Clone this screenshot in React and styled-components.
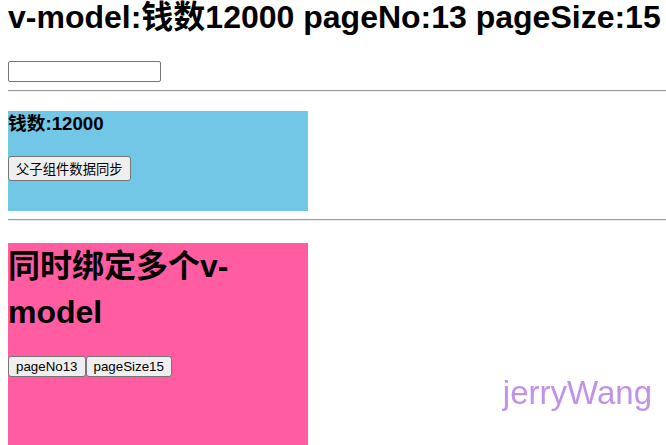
import React, { useState } from 'react';
import styled, { createGlobalStyle } from 'styled-components';

const GlobalStyle = createGlobalStyle`
  body {
    margin: 0;
    font-family: "Liberation Sans", "Noto Sans CJK SC", sans-serif;
    color: #000;
    background: #fff;
    overflow: hidden;
  }
`;

const Page = styled.div`
  padding-left: 8px;
`;

const Title = styled.h1`
  margin: -6px 0 21.44px;
  font-size: 32px;
  line-height: 46px;
  font-weight: bold;
  white-space: nowrap;
`;

const MoneyInput = styled.input`
  display: block;
  box-sizing: border-box;
  width: 153px;
  height: 21px;
  margin: 0;
  padding: 1px 2px;
  border: 1px solid #767676;
  border-radius: 2px;
  font: 13.33px "Liberation Sans", sans-serif;
`;

const Divider = styled.hr`
  margin: 8px 0;
  height: 0;
  border: 0;
  border-top: 1px solid #9a9a9a;
  border-bottom: 1px solid #eeeeee;
`;

const Panel = styled.div`
  width: 300px;
  height: ${(p) => p.$height}px;
  background: ${(p) => p.$color};
`;

const PanelHeading = styled.h3`
  margin: 18.72px 0;
  font-size: 18.72px;
  line-height: 26px;
  font-weight: bold;
`;

const BigHeading = styled.h1`
  margin: 21.44px 0;
  font-size: 32px;
  line-height: 46px;
  font-weight: bold;
`;

const ButtonRow = styled.div`
  display: flex;
`;

const Button = styled.button`
  box-sizing: border-box;
  margin: 0;
  padding: 2px 7px;
  border: 1px solid #767676;
  border-radius: 3px;
  background: #efefef;
  color: #000;
  font: 13.33px "Liberation Sans", "Noto Sans CJK SC", sans-serif;
  cursor: pointer;
`;

const Watermark = styled.div`
  position: fixed;
  right: 14px;
  bottom: 33px;
  font-size: 33px;
  color: #c192ea;
  pointer-events: none;
`;

export default function App() {
  const [money, setMoney] = useState(12000);
  const [pageNo, setPageNo] = useState(13);
  const [pageSize, setPageSize] = useState(15);

  return (
    <Page>
      <GlobalStyle />
      <Title>
        v-model:钱数{money} pageNo:{pageNo} pageSize:{pageSize}
      </Title>
      <MoneyInput type="text" defaultValue="" />
      <Divider />
      <Panel $color="#72c6e6" $height={100}>
        <PanelHeading>钱数:{money}</PanelHeading>
        <Button onClick={() => setMoney(money)}>父子组件数据同步</Button>
      </Panel>
      <Divider />
      <Panel $color="#ff5ca2" $height={210}>
        <BigHeading>同时绑定多个v-model</BigHeading>
        <ButtonRow>
          <Button onClick={() => setPageNo(pageNo)}>pageNo{pageNo}</Button>
          <Button onClick={() => setPageSize(pageSize)}>pageSize{pageSize}</Button>
        </ButtonRow>
      </Panel>
      <Watermark>jerryWang</Watermark>
    </Page>
  );
}
